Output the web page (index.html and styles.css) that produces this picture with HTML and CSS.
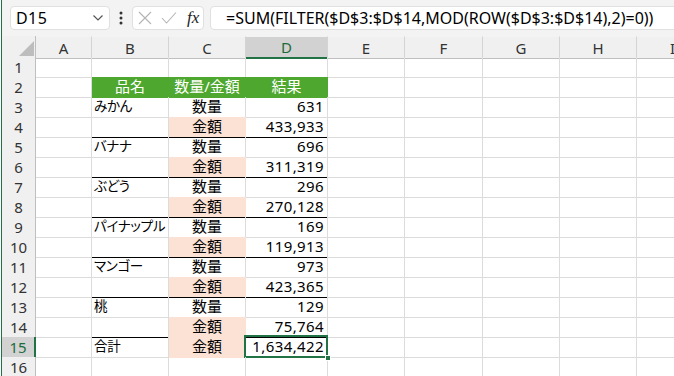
FILE: index.html
```html
<!DOCTYPE html>
<html lang="ja">

<head>
    <meta charset="UTF-8">
    <meta name="viewport" content="width=device-width, initial-scale=1.0">
    <title>Book1 - Excel</title>
    <link rel="stylesheet" href="styles.css">
</head>

<body>
    <div class="app">
        <div class="topbar">
            <div class="name-box">
                <span>D15</span>
                <svg class="chev" width="12" height="8" viewBox="0 0 12 8"><path d="M1.5 1.5 L6 6 L10.5 1.5" fill="none" stroke="#555" stroke-width="1.2"/></svg>
            </div>
            <div class="dots">
                <svg width="4" height="14" viewBox="0 0 4 14"><circle cx="2" cy="2" r="1.5" fill="#333"/><circle cx="2" cy="7" r="1.5" fill="#333"/><circle cx="2" cy="12" r="1.5" fill="#333"/></svg>
            </div>
            <div class="fx-box">
                <svg class="ico" width="14" height="14" viewBox="0 0 14 14"><path d="M1 1 L13 13 M13 1 L1 13" stroke="#b4b4b4" stroke-width="1.1"/></svg>
                <svg class="ico" width="16" height="14" viewBox="0 0 16 14"><path d="M1 7 L5.5 12 L15 1.5" fill="none" stroke="#b4b4b4" stroke-width="1.1"/></svg>
                <span class="fx">fx</span>
            </div>
            <div class="formula">=SUM(FILTER($D$3:$D$14,MOD(ROW($D$3:$D$14),2)=0))</div>
        </div>

        <div class="sheet">
            <div class="row head">
                <div class="corner"><svg width="15" height="15" viewBox="0 0 15 15"><path d="M15 0 L15 15 L0 15 Z" fill="#bdbdbd"/></svg></div>
                <div class="ch">A</div>
                <div class="ch">B</div>
                <div class="ch">C</div>
                <div class="ch sel">D</div>
                <div class="ch">E</div>
                <div class="ch">F</div>
                <div class="ch">G</div>
                <div class="ch">H</div>
                <div class="ch last">I</div>
            </div>

            <div class="row">
                <div class="rh">1</div>
                <div class="c"></div><div class="c"></div><div class="c"></div><div class="c"></div>
                <div class="c"></div><div class="c"></div><div class="c"></div><div class="c"></div><div class="c"></div>
            </div>
            <div class="row">
                <div class="rh">2</div>
                <div class="c"></div>
                <div class="c title">品名</div>
                <div class="c title">数量/金額</div>
                <div class="c title">結果</div>
                <div class="c"></div><div class="c"></div><div class="c"></div><div class="c"></div><div class="c"></div>
            </div>
            <div class="row">
                <div class="rh">3</div>
                <div class="c"></div>
                <div class="c name">みかん</div>
                <div class="c kind">数量</div>
                <div class="c num">631</div>
                <div class="c"></div><div class="c"></div><div class="c"></div><div class="c"></div><div class="c"></div>
            </div>
            <div class="row">
                <div class="rh">4</div>
                <div class="c"></div>
                <div class="c name line"></div>
                <div class="c kind money line">金額</div>
                <div class="c num line">433,933</div>
                <div class="c"></div><div class="c"></div><div class="c"></div><div class="c"></div><div class="c"></div>
            </div>
            <div class="row">
                <div class="rh">5</div>
                <div class="c"></div>
                <div class="c name">バナナ</div>
                <div class="c kind">数量</div>
                <div class="c num">696</div>
                <div class="c"></div><div class="c"></div><div class="c"></div><div class="c"></div><div class="c"></div>
            </div>
            <div class="row">
                <div class="rh">6</div>
                <div class="c"></div>
                <div class="c name line"></div>
                <div class="c kind money line">金額</div>
                <div class="c num line">311,319</div>
                <div class="c"></div><div class="c"></div><div class="c"></div><div class="c"></div><div class="c"></div>
            </div>
            <div class="row">
                <div class="rh">7</div>
                <div class="c"></div>
                <div class="c name">ぶどう</div>
                <div class="c kind">数量</div>
                <div class="c num">296</div>
                <div class="c"></div><div class="c"></div><div class="c"></div><div class="c"></div><div class="c"></div>
            </div>
            <div class="row">
                <div class="rh">8</div>
                <div class="c"></div>
                <div class="c name line"></div>
                <div class="c kind money line">金額</div>
                <div class="c num line">270,128</div>
                <div class="c"></div><div class="c"></div><div class="c"></div><div class="c"></div><div class="c"></div>
            </div>
            <div class="row">
                <div class="rh">9</div>
                <div class="c"></div>
                <div class="c name">パイナップル</div>
                <div class="c kind">数量</div>
                <div class="c num">169</div>
                <div class="c"></div><div class="c"></div><div class="c"></div><div class="c"></div><div class="c"></div>
            </div>
            <div class="row">
                <div class="rh">10</div>
                <div class="c"></div>
                <div class="c name line"></div>
                <div class="c kind money line">金額</div>
                <div class="c num line">119,913</div>
                <div class="c"></div><div class="c"></div><div class="c"></div><div class="c"></div><div class="c"></div>
            </div>
            <div class="row">
                <div class="rh">11</div>
                <div class="c"></div>
                <div class="c name">マンゴー</div>
                <div class="c kind">数量</div>
                <div class="c num">973</div>
                <div class="c"></div><div class="c"></div><div class="c"></div><div class="c"></div><div class="c"></div>
            </div>
            <div class="row">
                <div class="rh">12</div>
                <div class="c"></div>
                <div class="c name line"></div>
                <div class="c kind money line">金額</div>
                <div class="c num line">423,365</div>
                <div class="c"></div><div class="c"></div><div class="c"></div><div class="c"></div><div class="c"></div>
            </div>
            <div class="row">
                <div class="rh">13</div>
                <div class="c"></div>
                <div class="c name">桃</div>
                <div class="c kind">数量</div>
                <div class="c num">129</div>
                <div class="c"></div><div class="c"></div><div class="c"></div><div class="c"></div><div class="c"></div>
            </div>
            <div class="row">
                <div class="rh">14</div>
                <div class="c"></div>
                <div class="c name line"></div>
                <div class="c kind money line">金額</div>
                <div class="c num line">75,764</div>
                <div class="c"></div><div class="c"></div><div class="c"></div><div class="c"></div><div class="c"></div>
            </div>
            <div class="row">
                <div class="rh sel">15</div>
                <div class="c"></div>
                <div class="c name">合計</div>
                <div class="c kind money">金額</div>
                <div class="c num active">1,634,422<span class="handle"></span></div>
                <div class="c"></div><div class="c"></div><div class="c"></div><div class="c"></div><div class="c"></div>
            </div>
            <div class="row">
                <div class="rh">16</div>
                <div class="c"></div><div class="c"></div><div class="c"></div><div class="c"></div>
                <div class="c"></div><div class="c"></div><div class="c"></div><div class="c"></div><div class="c"></div>
            </div>
        </div>
    </div>
</body>

</html>
```

FILE: styles.css
```css
* {
    margin: 0;
    padding: 0;
    box-sizing: border-box;
}

body {
    background-color: #fff;
    font-family: "Noto Sans", "Noto Sans CJK JP", sans-serif;
    color: #000;
}

.app {
    margin-left: 1px;
    border-left: 1px solid #217346;
    height: 376px;
    overflow: hidden;
}

/* formula bar */
.topbar {
    height: 36px;
    background-color: #f3f3f3;
    display: flex;
    align-items: center;
    padding-left: 8px;
}

.name-box {
    width: 100px;
    height: 24px;
    background-color: #fff;
    border: 1px solid #e0e0e0;
    border-radius: 4px;
    display: flex;
    align-items: center;
    justify-content: space-between;
    padding: 0 5px 0 5px;
    font-size: 16px;
    letter-spacing: 0.4px;
}

.dots {
    width: 22px;
    display: flex;
    justify-content: center;
    align-items: center;
}

.fx-box {
    width: 72px;
    height: 24px;
    background-color: #fff;
    border: 1px solid #e0e0e0;
    border-radius: 4px;
    display: flex;
    align-items: center;
    padding-left: 5px;
    gap: 9px;
}

.fx {
    font-family: "Liberation Serif", serif;
    font-style: italic;
    font-size: 17px;
    color: #222;
    margin-left: 1px;
}

.formula {
    flex: 1;
    margin-left: 6px;
    margin-right: -12px;
    height: 24px;
    background-color: #fff;
    border: 1px solid #e0e0e0;
    border-radius: 4px;
    padding-left: 15px;
    font-size: 16px;
    line-height: 22px;
    white-space: nowrap;
}

/* grid */
.row {
    display: grid;
    grid-template-columns: 34px 56px 77px 77px 82px 77px 78px 77px 77px 77px;
    height: 20px;
}

.row.head {
    height: 21px;
}

.corner,
.ch,
.rh {
    background-color: #f0f0f0;
    color: #333;
    font-size: 15px;
    display: flex;
    align-items: center;
    justify-content: center;
}

.corner {
    border-right: 1px solid #bfbfbf;
    border-bottom: 1px solid #bfbfbf;
    justify-content: flex-end;
    align-items: flex-end;
    padding: 0 1px 2px 0;
}

.ch {
    border-right: 1px solid #d4d4d4;
    border-bottom: 1px solid #bfbfbf;
    border-top: 1px solid #f3f3f3;
}

.ch.last {
    justify-content: flex-start;
    padding-left: 33px;
}

.ch.sel {
    background-color: #d2d2d2;
    color: #1e6b3d;
    border-bottom: 2px solid #217346;
}

.rh {
    border-right: 1px solid #bfbfbf;
    border-bottom: 1px solid #d4d4d4;
}

.rh.sel {
    background-color: #d2d2d2;
    color: #1e6b3d;
    border-right: 2px solid #217346;
}

.c {
    position: relative;
    border-right: 1px solid #dcdcdc;
    border-bottom: 1px solid #dcdcdc;
    font-size: 15px;
    line-height: 19px;
    white-space: nowrap;
}

.title {
    background-color: #4ea72e;
    border-color: #4ea72e;
    color: #fff;
    text-align: center;
}

.name {
    padding-left: 2px;
    font-size: 13.5px;
    letter-spacing: -0.3px;
    font-feature-settings: "palt";
}

.kind {
    text-align: center;
}

.money {
    background-color: #fbe2d5;
    border-right-color: #fbe2d5;
    border-bottom-color: #fbe2d5;
}

.num {
    text-align: right;
    padding-right: 3px;
    letter-spacing: 0.4px;
}

.line {
    border-bottom-color: #000;
}

.active::after {
    content: "";
    position: absolute;
    left: -2px;
    top: -2px;
    right: -1px;
    bottom: -1px;
    border: 2px solid #217346;
}

.handle {
    position: absolute;
    right: -4px;
    bottom: -4px;
    width: 6px;
    height: 6px;
    background-color: #217346;
    border: 1px solid #fff;
    z-index: 2;
}
```
